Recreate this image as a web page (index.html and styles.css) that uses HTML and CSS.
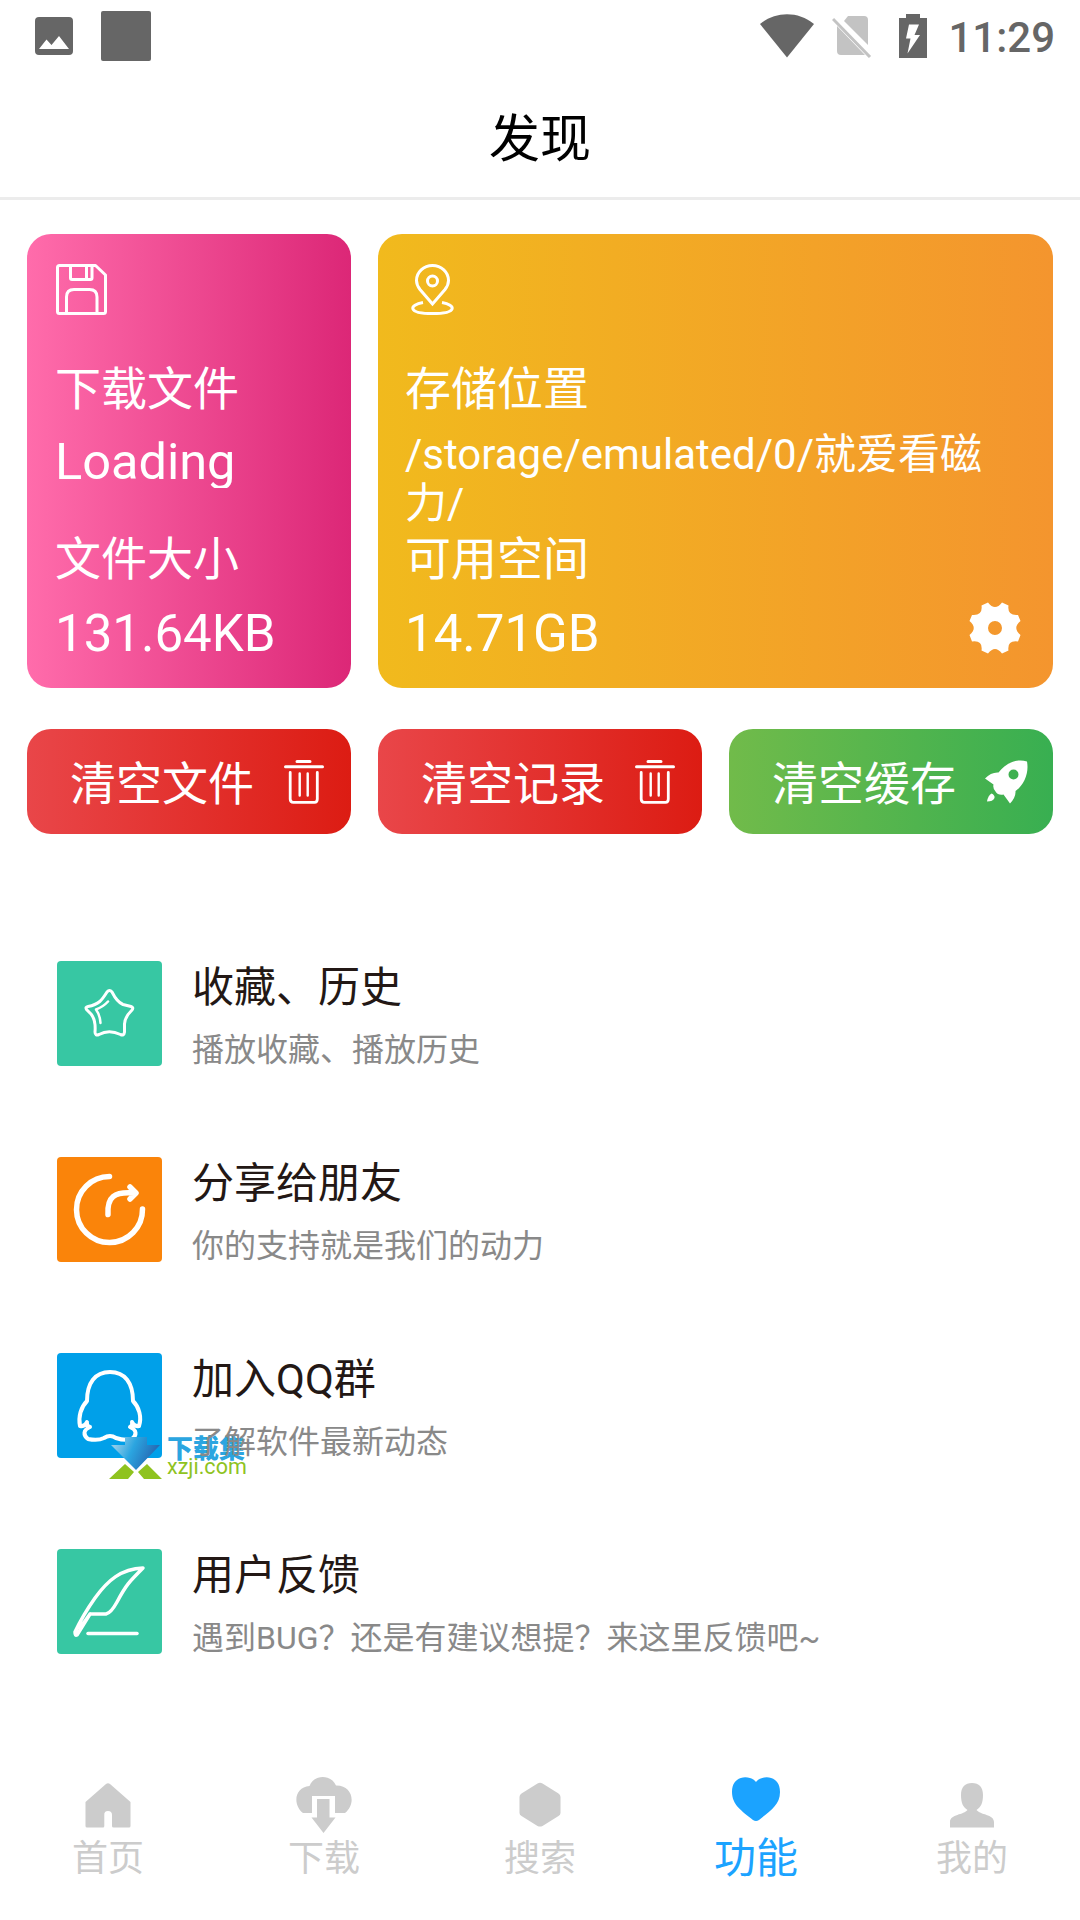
FILE: index.html
```html
<!DOCTYPE html>
<html lang="zh-CN">
<head>
    <meta charset="UTF-8">
    <meta name="viewport" content="width=device-width, initial-scale=1.0">
    <title>发现</title>
    <link rel="stylesheet" href="styles.css">
</head>
<body>
<div class="status-bar">
    <div class="status-left">
        <svg width="38" height="38" viewBox="0 0 38 38">
            <rect width="38" height="38" rx="4" fill="#666"/>
            <path d="M4 32L11.500 22.500L16.500 28L24 19L34 32Z" fill="#fff"/>
        </svg>
        <div class="status-square"></div>
    </div>
    <div class="status-right">
        <svg class="wifi" width="54" height="44" viewBox="0 0 54 44">
            <path d="M0 10C16-3 38-3 54 10L27 43.500Z" fill="#666"/>
        </svg>
        <svg class="sim" width="40" height="44" viewBox="0 0 40 44">
            <path d="M16 2H32Q36 2 36 6V31L12 7ZM5 12L33 41H9Q5 41 5 37Z" fill="#c3c3c3"/>
            <path d="M1 5L38 43" stroke="#c3c3c3" stroke-width="3"/>
        </svg>
        <svg class="battery" width="28" height="44" viewBox="0 0 28 44">
            <path d="M0 4H7V0H21V4H28V44H0Z" fill="#666"/>
            <path d="M10 10.500H20L15.500 21H21L8.500 39.500L11.500 24.500H7Z" fill="#fff"/>
        </svg>
        <span class="time">11:29</span>
    </div>
</div>
<div class="header">发现</div>

<div class="cards">
    <div class="card card-file">
        <svg width="51" height="51" viewBox="0 0 51 51" fill="none" stroke="#fff" stroke-width="3" stroke-linejoin="round">
            <path d="M3.500 1.500H39.500L49.500 11V47.500Q49.500 49.500 47.500 49.500H3.500Q1.500 49.500 1.500 47.500V3.500Q1.500 1.500 3.500 1.500Z"/>
            <path d="M14.500 2V14Q14.500 15.500 16 15.500H34.500Q36 15.500 36 14V2M30.500 2V15"/>
            <path d="M10.500 49V33Q10.500 25.500 18 25.500H33.500Q41 25.500 41 33V49"/>
        </svg>
        <div class="label">下载文件</div>
        <div class="value value-first">Loading</div>
        <div class="label">文件大小</div>
        <div class="value">131.64KB</div>
    </div>
    <div class="card card-storage">
        <svg width="51" height="51" viewBox="0 0 51 51" fill="none" stroke="#fff" stroke-width="3">
            <path d="M26.500 40L14 25.500Q10.500 21 10.500 16.500A16 15 0 0 1 42.500 16.500Q42.500 21 39 25.500Z"/>
            <circle cx="26.500" cy="17" r="5"/>
            <path d="M17 38.500C3 41 1 49.500 26.500 49.500S50 41 36 38.500"/>
        </svg>
        <div class="label">存储位置</div>
        <div class="path">/storage/emulated/0/就爱看磁力/</div>
        <div class="label">可用空间</div>
        <div class="value">14.71GB</div>
        <svg class="gear" width="52" height="52" viewBox="0 0 52 52">
            <path fill="#fff" fill-rule="evenodd" d="M19 .500Q26 9.500 33 .500L39.500 3.500Q38 14 49 13L51.500 19Q43 26 51.500 33L49 39.500Q38 38 39.500 48.500L33 51.500Q26 42.500 19 51.500L12.500 48.500Q14 38 3 39.500L.500 33Q9 26 .500 19L3 13Q14 14 12.500 3.500ZM26 19A7 7 0 1 0 26 33A7 7 0 1 0 26 19Z"/>
        </svg>
    </div>
</div>

<div class="buttons">
    <div class="btn btn-red">
        <span>清空文件</span>
        <svg width="40" height="44" viewBox="0 0 40 44" fill="none" stroke="#fff" stroke-linecap="round" stroke-linejoin="round">
            <path d="M13 1.500H26M1.500 6.700H38.500" stroke-width="3"/>
            <path d="M6.200 12.500V39Q6.200 42.300 9.500 42.300H30.500Q33.300 42.300 33.300 39V12.500" stroke-width="2.800"/>
            <path d="M15.700 13.500V35.500M23.700 13.500V35.500" stroke-width="2.400"/>
        </svg>
    </div>
    <div class="btn btn-red">
        <span>清空记录</span>
        <svg width="40" height="44" viewBox="0 0 40 44" fill="none" stroke="#fff" stroke-linecap="round" stroke-linejoin="round">
            <path d="M13 1.500H26M1.500 6.700H38.500" stroke-width="3"/>
            <path d="M6.200 12.500V39Q6.200 42.300 9.500 42.300H30.500Q33.300 42.300 33.300 39V12.500" stroke-width="2.800"/>
            <path d="M15.700 13.500V35.500M23.700 13.500V35.500" stroke-width="2.400"/>
        </svg>
    </div>
    <div class="btn btn-green">
        <span>清空缓存</span>
        <svg width="43" height="44" viewBox="0 0 43 44">
            <path fill="#fff" fill-rule="evenodd" d="M42 1.500C44 12 40 24 30.500 31Q31 37 25 43.500L18.500 34.500Q13 35.500 10.500 31.500Q7.500 28 8.500 24.500L0 18.500Q6 12 13.500 12.500C20 4 31-2 42 1.500ZM28.500 9.500A5 5 0 1 0 28.500 19.500A5 5 0 1 0 28.500 9.500Z"/>
            <path fill="#fff" d="M6.500 33.500Q10 35 9.500 38Q8 41.500 2 41.500Q3 35.500 6.500 33.500Z"/>
        </svg>
    </div>
</div>

<div class="menu">
    <div class="menu-item">
        <svg class="menu-icon green" viewBox="0 0 105 105" fill="none" stroke="#fff" stroke-width="3" stroke-linecap="round" stroke-linejoin="round">
            <path d="M50 31Q52.500 28 55 31Q60 41 66 43.500L74 45.500Q77 46.500 75 49Q67 57 67.500 64L67.500 71Q67 75 63.500 73.500Q52 68 42 73.500Q38 75 38 71Q39 59 34 53L29.500 48.500Q28 46 31 45.500C42 43.500 45 39 50 31Z"/>
            <path d="M51 40.500Q46 46 39 48.500Q43 54 43.500 62" stroke-width="2.500"/>
        </svg>
        <div class="menu-text">
            <div class="menu-title">收藏、历史</div>
            <div class="menu-desc">播放收藏、播放历史</div>
        </div>
    </div>
    <div class="menu-item">
        <svg class="menu-icon orange" viewBox="0 0 105 105" fill="none" stroke="#fff" stroke-width="5.500" stroke-linecap="round" stroke-linejoin="round">
            <path d="M52.500 19.500A33 33 0 1 0 85.500 52"/>
            <path d="M51 57.500C50 40 57 34.500 77 36M73 30L79 36L73 42"/>
        </svg>
        <div class="menu-text">
            <div class="menu-title">分享给朋友</div>
            <div class="menu-desc">你的支持就是我们的动力</div>
        </div>
    </div>
    <div class="menu-item">
        <svg class="menu-icon blue" viewBox="0 0 105 105" fill="none" stroke="#fff" stroke-width="4" stroke-linecap="round" stroke-linejoin="round">
            <path d="M53 19C38 19 30 30 30 48C24 54 21 64 23 73Q28 74 30 69Q29 73 33 74C26 77 26 82 31 86Q41 88 47 85Q53 81 59 85Q68 88 75 86C80 82 80 77 73 74Q76 73 75 69Q77 74 82 73C85 64 82 54 76 48C76 30 68 19 53 19Z"/>
        </svg>
        <div class="menu-text">
            <div class="menu-title">加入QQ群</div>
            <div class="menu-desc">了解软件最新动态</div>
        </div>
        <div class="watermark">
            <svg width="54" height="44" viewBox="0 0 54 44">
                <defs>
                    <linearGradient id="arrow" x1="0" y1="0" x2="1" y2="0.300">
                        <stop offset="0.150" stop-color="#8ecbe9"/>
                        <stop offset="0.500" stop-color="#2ba5e0"/>
                        <stop offset="1" stop-color="#2666b1"/>
                    </linearGradient>
                </defs>
                <path d="M16 1H38V9H51L27 34L2 9H16Z" fill="url(#arrow)"/>
                <path d="M0 43L16 28L25 36L19 43ZM29 36L38 28L53 43H35Z" fill="#8fc31f"/>
            </svg>
            <div class="watermark-text">
                <div class="watermark-name">下载集</div>
                <div class="watermark-url">xzji.com</div>
            </div>
        </div>
    </div>
    <div class="menu-item">
        <svg class="menu-icon green" viewBox="0 0 105 105" fill="none" stroke="#fff" stroke-width="3.500" stroke-linecap="round" stroke-linejoin="round">
            <path d="M20 86L33 65H49Q54 64 60 53C69 36 72 33 86 19C64 20 51 31 38 49Q26 66 18 83Q18 87 20 86ZM33 65L23 79"/>
            <path d="M31 84.500H80" stroke-width="3.500"/>
        </svg>
        <div class="menu-text">
            <div class="menu-title">用户反馈</div>
            <div class="menu-desc">遇到BUG？还是有建议想提？来这里反馈吧~</div>
        </div>
    </div>
</div>

<div class="tab-bar">
    <div class="tab">
        <svg width="60" height="60" viewBox="0 0 60 60">
            <path fill="currentColor" d="M7.500 27L28 9Q30 7.500 32 9L52.500 27V51Q52.500 52.500 51 52.500H35.500Q34 52.500 34 51V40Q34 36 30 36T26.300 40V51Q26.300 52.500 25 52.500H9Q7.500 52.500 7.500 51Z"/>
        </svg>
        <span>首页</span>
    </div>
    <div class="tab">
        <svg width="60" height="60" viewBox="0 0 60 60">
            <path fill="currentColor" d="M9 38C-2 29 1 12 15.500 11C20-1 37-1 42 10.500C58 10 63 28 51 38H41V21H18V38Z"/>
            <path fill="currentColor" d="M23 24H35.500V42.500H41.500L29.500 58L17.500 42.500H23Z"/>
        </svg>
        <span>下载</span>
    </div>
    <div class="tab">
        <svg width="60" height="60" viewBox="0 0 60 60">
            <path fill="currentColor" d="M27.500 8.500Q30 7 32.500 8.500L48.500 18.500Q50.500 19.500 50.500 22V38Q50.500 40 48.500 41L32.500 51Q30 52 27.500 51L11.500 41Q9.500 40 9.500 38V22Q9.500 19.500 11.500 18.500Z"/>
        </svg>
        <span>搜索</span>
    </div>
    <div class="tab active">
        <svg width="60" height="60" viewBox="0 0 60 60">
            <path fill="currentColor" d="M30 7C35 0 54-1 54 17C54 30 44 36 33 45Q30 47 27 45C16 36 6 30 6 17C6-1 25 0 30 7Z"/>
        </svg>
        <span>功能</span>
    </div>
    <div class="tab">
        <svg width="60" height="60" viewBox="0 0 60 60">
            <path fill="currentColor" d="M30 8C37 8 41 12 41 20C41 28 39 32 34.500 35C38 40 52 39 52 47V52.500H8V47C8 39 22 40 25.500 35C21 32 19 28 19 20C19 12 23 8 30 8Z"/>
        </svg>
        <span>我的</span>
    </div>
</div>
</body>
</html>
```

FILE: styles.css
```css
* {
    box-sizing: border-box;
}
body {
    margin: 0;
    width: 1080px;
    height: 1920px;
    background: #fff;
    font-family: Roboto, "Noto Sans CJK SC", sans-serif;
    display: flex;
    flex-direction: column;
    overflow: hidden;
}
svg {
    display: block;
    flex-shrink: 0;
}
.status-bar {
    height: 72px;
    padding: 0 25px 0 35px;
    display: flex;
    justify-content: space-between;
    align-items: center;
}
.status-left, .status-right {
    display: flex;
    align-items: center;
}
.status-left {
    gap: 28px;
}
.status-square {
    width: 50px;
    height: 50px;
    border-radius: 2px;
    background: #666;
}
.wifi {
    margin-right: 18px;
}
.sim {
    margin-right: 27px;
}
.battery {
    margin-right: 21px;
}
.time {
    padding-top: 3px;
    font-size: 42px;
    font-weight: 500;
    line-height: 70px;
    color: #666;
}
.header {
    height: 128px;
    padding-top: 7px;
    border-bottom: 3px solid #ececec;
    font-size: 51px;
    line-height: 122px;
    text-align: center;
    color: #000;
}
.cards {
    display: flex;
    gap: 27px;
    padding: 34px 27px 0;
}
.card {
    position: relative;
    height: 454px;
    padding: 30px 27px 0 28px;
    border-radius: 24px;
    color: #fff;
}
.card > svg:first-child {
    margin-left: 1px;
}
.card-file {
    width: 324px;
    background: linear-gradient(90deg, #ff6cab, #dc2777);
}
.card-storage {
    flex: 1;
    padding-left: 27px;
    background: linear-gradient(90deg, #f1ba1d, #f4952e);
}
.label {
    margin-top: 44px;
    font-size: 46px;
    line-height: 60px;
}
.value {
    margin-top: 15px;
    font-size: 51px;
    line-height: 60px;
}
.value-first {
    height: 58px;
    margin-top: 11px;
    font-size: 50.500px;
    line-height: 63px;
    overflow: hidden;
}
.value-first + .label {
    margin-top: 41px;
}
.path {
    height: 98px;
    margin-top: 11px;
    font-size: 42px;
    line-height: 49px;
    word-break: break-all;
}
.path + .label {
    margin-top: 1px;
}
.gear {
    position: absolute;
    right: 32px;
    bottom: 34px;
}
.buttons {
    display: flex;
    gap: 27px;
    padding: 41px 27px 0;
}
.btn {
    width: 324px;
    height: 105px;
    padding-left: 43px;
    border-radius: 24px;
    display: flex;
    align-items: center;
    color: #fff;
    font-size: 46px;
}
.btn span {
    width: 214px;
    padding-top: 4px;
    line-height: 60px;
}
.btn-red {
    background: linear-gradient(90deg, #e94649, #dc1c13);
}
.btn-green {
    background: linear-gradient(90deg, #71bb4a, #38af51);
}
.btn-green span {
    width: 213px;
}
.menu {
    padding: 127px 57px 0;
    display: flex;
    flex-direction: column;
    gap: 91px;
}
.menu-item {
    position: relative;
    height: 105px;
    display: flex;
    gap: 30px;
}
.menu-icon {
    width: 105px;
    height: 105px;
    border-radius: 4px;
}
.green {
    background: #37c7a3;
}
.orange {
    background: #fa840a;
}
.blue {
    background: #00a0e9;
}
.menu-text {
    position: relative;
    z-index: 1;
}
.menu-title {
    font-size: 42px;
    line-height: 54px;
    color: #231815;
}
.menu-desc {
    margin-top: 10px;
    font-size: 32px;
    line-height: 50px;
    color: #898989;
}
.watermark {
    position: absolute;
    left: 52px;
    top: 83px;
    display: flex;
    gap: 4px;
}
.watermark-name {
    padding-top: 2px;
    font-size: 26px;
    font-weight: 900;
    line-height: 23px;
    color: #2ba5e0;
}
.watermark-url {
    margin-top: -4px;
    font-size: 21.500px;
    line-height: 20px;
    color: #8fc31f;
}
.tab-bar {
    margin-top: auto;
    height: 145px;
    display: flex;
}
.tab {
    flex: 1;
    display: flex;
    flex-direction: column;
    align-items: center;
    font-size: 36px;
    line-height: 48px;
    color: #ccc;
}
.tab.active {
    font-size: 42px;
    color: #1ba3ff;
}
```
